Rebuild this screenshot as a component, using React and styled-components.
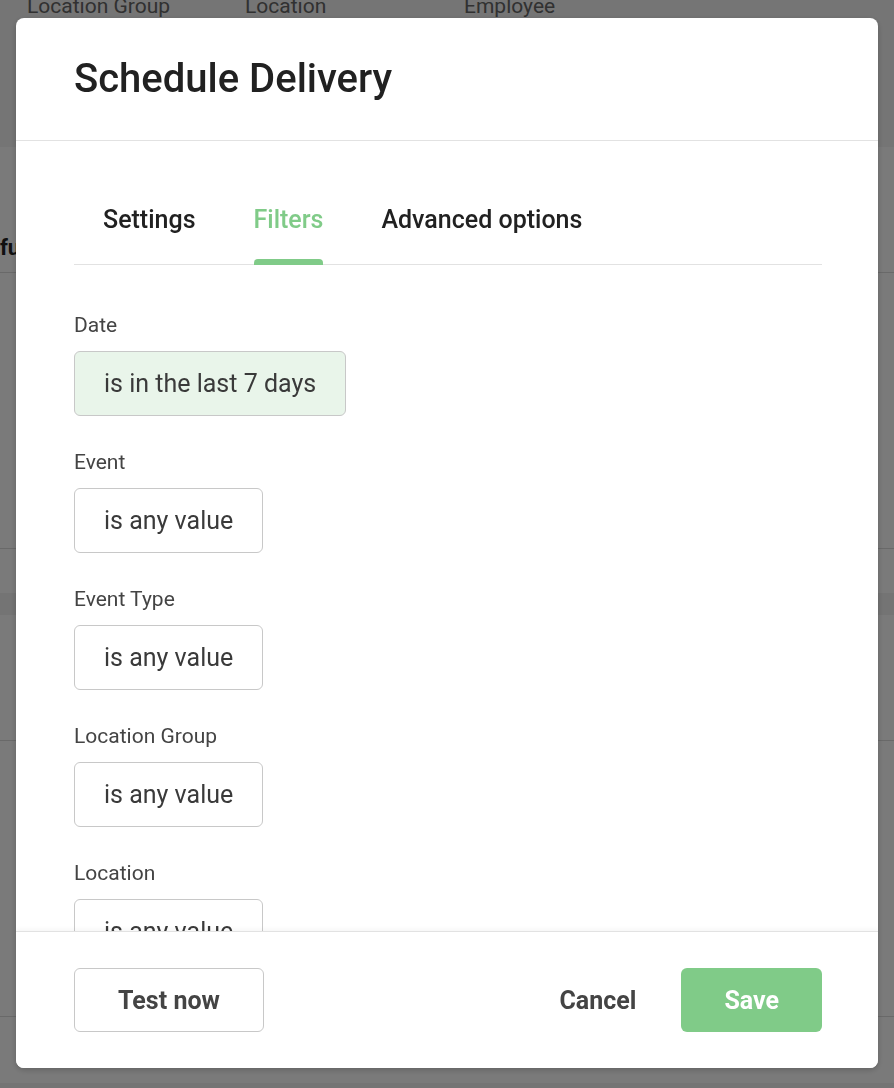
import React, { useState } from "react";
import styled, { createGlobalStyle, css } from "styled-components";

const GlobalStyle = createGlobalStyle`
  html, body {
    margin: 0;
    padding: 0;
  }
  body {
    font-family: Roboto, "Noto Sans", Arial, sans-serif;
    background: #fff;
    height: 1088px;
    overflow: hidden;
  }
  * {
    box-sizing: border-box;
  }
`;

const green = "#80cb88";

const filters = [
  { label: "Date", value: "is in the last 7 days", active: true },
  { label: "Event", value: "is any value" },
  { label: "Event Type", value: "is any value" },
  { label: "Location Group", value: "is any value" },
  { label: "Location", value: "is any value" },
];

const tabs = ["Settings", "Filters", "Advanced options"];

const App = () => {
  const [tab, setTab] = useState("Filters");

  return (
    <>
      <GlobalStyle />
      {/* report page sitting behind the dialog */}
      <Page>
        <PageHead>
          <HeadRow>
            <HeadCell>Location Group</HeadCell>
            <HeadCell>Location</HeadCell>
            <HeadCell>Employee</HeadCell>
          </HeadRow>
        </PageHead>
        <PageRow $h={126}>
          <RowTitle>fulfilled orders</RowTitle>
        </PageRow>
        <PageRow $h={276} />
        <PageRow $h={44} $plain />
        <PageBand $h={22} />
        <PageRow $h={126} />
        <PageRow $h={276} />
        <PageRow $h={66} $plain />
        <PageBand $h={40} />
      </Page>

      <Overlay>
        <Modal>
          <Header>
            <Title>Schedule Delivery</Title>
          </Header>
          <Body>
            <TabList>
              {tabs.map((t) => (
                <Tab key={t} $active={t === tab} onClick={() => setTab(t)}>
                  {t}
                </Tab>
              ))}
            </TabList>
            <FilterList>
              {filters.map((f) => (
                <FilterGroup key={f.label}>
                  <FilterLabel>{f.label}</FilterLabel>
                  <Pill $active={f.active}>{f.value}</Pill>
                </FilterGroup>
              ))}
            </FilterList>
          </Body>
          <Footer>
            <Button $variant="outline">Test now</Button>
            <Actions>
              <Button $variant="text">Cancel</Button>
              <Button $variant="primary">Save</Button>
            </Actions>
          </Footer>
        </Modal>
      </Overlay>
    </>
  );
};

const Page = styled.div`
  height: 1088px;
  overflow: hidden;
  background: #fff;
`;
const PageHead = styled.div`
  display: flow-root;
  height: 147px;
  background: #f4f4f4;
`;
const HeadRow = styled.div`
  display: grid;
  grid-template-columns: 218px 219px 1fr;
  padding-left: 27px;
  margin-top: -6px;
`;
const HeadCell = styled.span`
  font-size: 21px;
  line-height: 24px;
  color: #666;
`;
const PageRow = styled.div`
  height: ${(p) => p.$h}px;
  display: flex;
  align-items: flex-end;
  padding-bottom: 12px;
  border-bottom: ${(p) => (p.$plain ? "none" : "1px solid #dcdcdc")};
`;
const PageBand = styled.div`
  height: ${(p) => p.$h}px;
  background: #f2f2f2;
`;
const RowTitle = styled.span`
  font-size: 22px;
  font-weight: 700;
  color: #222;
  white-space: nowrap;
`;

const Overlay = styled.div`
  position: fixed;
  inset: 0;
  background: rgba(0, 0, 0, 0.52);
  display: flex;
  justify-content: center;
  align-items: flex-start;
  padding: 18px 16px 0;
`;
const Modal = styled.div`
  width: 862px;
  height: 1050px;
  background: #fff;
  border-radius: 8px;
  display: flex;
  flex-direction: column;
  overflow: hidden;
  box-shadow: 0 2px 6px rgba(0, 0, 0, 0.2);
`;
const Header = styled.header`
  height: 123px;
  flex-shrink: 0;
  display: flex;
  align-items: center;
  padding: 0 58px;
  border-bottom: 1px solid #e2e2e2;
`;
const Title = styled.h1`
  margin: 0;
  font-size: 40px;
  line-height: 48px;
  font-weight: 500;
  color: #212121;
`;
const Body = styled.div`
  flex: 1;
  overflow: hidden;
  padding: 0 56px 0 58px;
`;
const TabList = styled.div`
  display: flex;
  gap: 58px;
  margin-top: 40px;
  padding-left: 29px;
  border-bottom: 1px solid #e2e2e2;
`;
const Tab = styled.button`
  position: relative;
  border: none;
  background: none;
  padding: 25px 0 30px;
  font-family: inherit;
  font-size: 25px;
  line-height: 28px;
  font-weight: 500;
  color: ${(p) => (p.$active ? green : "#212121")};
  cursor: pointer;
  &::after {
    content: "";
    display: ${(p) => (p.$active ? "block" : "none")};
    position: absolute;
    left: 0;
    right: 0;
    bottom: -1px;
    height: 6px;
    border-radius: 4px 4px 0 0;
    background: ${green};
  }
`;
const FilterList = styled.div`
  display: flex;
  flex-direction: column;
  gap: 34px;
  margin-top: 48px;
`;
const FilterGroup = styled.div`
  display: flex;
  flex-direction: column;
  align-items: flex-start;
`;
const FilterLabel = styled.span`
  font-size: 21px;
  line-height: 24px;
  color: #444;
  margin-bottom: 14px;
`;
const Pill = styled.button`
  display: inline-flex;
  align-items: center;
  height: 65px;
  padding: 0 29px;
  border: 1px solid #c8c8c8;
  border-radius: 6px;
  background: ${(p) => (p.$active ? "#e9f5ea" : "#fff")};
  font-family: inherit;
  font-size: 25px;
  line-height: 28px;
  color: #3a3a3a;
  cursor: pointer;
`;
const Footer = styled.footer`
  flex-shrink: 0;
  display: flex;
  justify-content: space-between;
  padding: 36px 56px 36px 58px;
  border-top: 1px solid #e2e2e2;
  box-shadow: 0 -2px 4px rgba(0, 0, 0, 0.04);
  position: relative;
  background: #fff;
`;
const Actions = styled.div`
  display: flex;
  gap: 2px;
`;

const variants = {
  outline: css`
    border: 1px solid #c8c8c8;
    background: #fff;
    color: #444;
  `,
  text: css`
    border: none;
    background: none;
    color: #444;
  `,
  primary: css`
    border: none;
    background: ${green};
    color: #fff;
  `,
};

const Button = styled.button`
  height: 64px;
  padding: 0 43px;
  border-radius: 6px;
  font-family: inherit;
  font-size: 25px;
  font-weight: 700;
  cursor: pointer;
  ${(p) => variants[p.$variant]}
`;

export default App;
